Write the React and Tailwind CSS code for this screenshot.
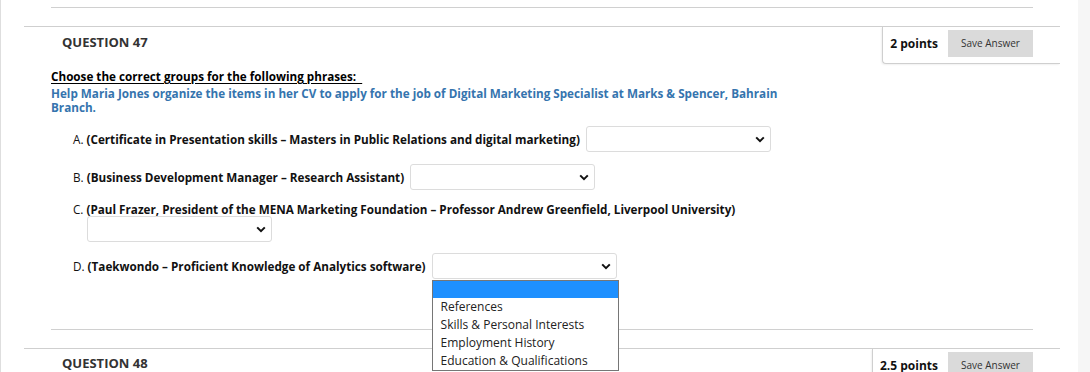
import React from "react";

const Chevron = () => (
  <svg width="10" height="7" viewBox="0 0 10 7" className="block">
    <path d="M1.2 1.4 L5 5.2 L8.8 1.4" stroke="#111" strokeWidth="2" fill="none" />
  </svg>
);

function Select({ className = "", children }) {
  return (
    <div
      className={`relative w-[185px] h-[26px] shrink-0 border border-[#dcdcdc] rounded-[3px] bg-white flex items-center justify-end pr-[5px] ${className}`}
    >
      <Chevron />
      {children}
    </div>
  );
}

function PointsBox({ points, width }) {
  return (
    <div
      className={`${width} h-[37px] border-l border-b border-[#cfcfcf] rounded-bl-[4px] shadow-[-1px_1px_2px_rgba(0,0,0,0.06)] flex items-start justify-end pr-[27px] pt-[3px] bg-white`}
    >
      <span className="text-[12px] font-bold text-[#111] leading-[27px] mr-[10px]">{points}</span>
      <button className="w-[85px] h-[27px] bg-[#dadada] text-[10px] text-[#333] leading-[27px] text-center">
        Save Answer
      </button>
    </div>
  );
}

export default function App() {
  return (
    <div
      className="w-[1090px] h-[372px] overflow-hidden bg-white flex"
      style={{ fontFamily: '"Open Sans", "Noto Sans", sans-serif' }}
    >
      <div className="w-[1078px] shrink-0 border-l border-[#dedede]">
        <div className="h-[7px]" />
        <div className="ml-[50px] w-[982px] h-px bg-[#d0d0d0]" />
        <div className="h-[18px]" />
        <section className="ml-[23px] w-[1036px] border-t border-[#cfcfcf]">
          <div className="flex justify-between">
            <div className="pl-[38px] pt-[6px] text-[13px] font-bold text-[#333] leading-[18px]">
              QUESTION 47
            </div>
            <PointsBox points="2 points" width="w-[178px]" />
          </div>
          <div className="pl-[27px] -mt-px">
            <div className="pt-[6px] text-[11.7px] font-bold text-black leading-[14px]">
              <span className="underline underline-offset-[2px]">Choose the correct groups for the following phrases:&nbsp;&nbsp;</span>
            </div>
            <p className="mt-[3px] w-[750px] text-[11.7px] font-bold text-[#3574ae] leading-[14px]">
              Help Maria Jones organize the items in her CV to apply for the job of Digital Marketing Specialist at Marks &amp; Spencer, Bahrain Branch.
            </p>
            <div className="pl-[22px] text-[11.7px] text-[#111] leading-[14px]">
              <div className="mt-[12px] flex items-center gap-[6px]">
                <span>
                  A. <b>(Certificate in Presentation skills – Masters in Public Relations and digital marketing)</b>
                </span>
                <Select />
              </div>
              <div className="mt-[12px] flex items-center gap-[6px]">
                <span>
                  B. <b>(Business Development Manager – Research Assistant)</b>
                </span>
                <Select />
              </div>
              <div className="mt-[12px]">
                <span>
                  C. <b>(Paul Frazer, President of the MENA Marketing Foundation – Professor Andrew Greenfield, Liverpool University)</b>
                </span>
              </div>
              <Select className="ml-[14px]" />
              <div className="mt-[11px] flex items-center gap-[6px]">
                <span>
                  D. <b>(Taekwondo – Proficient Knowledge of Analytics software)</b>
                </span>
                <Select>
                  <div className="absolute left-[-1px] top-[26px] w-[187px] border border-[#767676] bg-white z-10 text-[12px] text-[#222] leading-[18px]">
                    <div className="h-[17px] bg-[#1e90ff]" />
                    <div className="pl-[8px]">References</div>
                    <div className="pl-[8px]">Skills &amp; Personal Interests</div>
                    <div className="pl-[8px]">Employment History</div>
                    <div className="pl-[8px]">Education &amp; Qualifications</div>
                  </div>
                </Select>
              </div>
            </div>
          </div>
          <div className="mt-[50px] ml-[27px] w-[982px] h-px bg-[#d0d0d0]" />
        </section>
        <div className="h-[18px]" />
        <section className="ml-[23px] w-[1036px] border-t border-[#cfcfcf]">
          <div className="flex justify-between">
            <div className="pl-[38px] pt-[5px] text-[13px] font-bold text-[#333] leading-[18px]">
              QUESTION 48
            </div>
            <PointsBox points="2.5 points" width="w-[188px]" />
          </div>
        </section>
      </div>
      <div className="flex-1 bg-[#f6f6f6]" />
    </div>
  );
}
